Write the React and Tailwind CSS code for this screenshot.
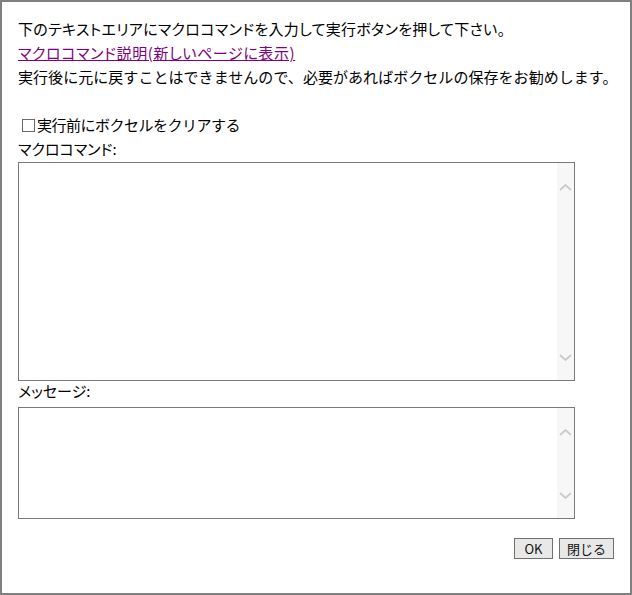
import React from "react";

// Fake textarea with a light scrollbar strip (up/down chevrons)
function CommandBox({ height }) {
  return (
    <div className={`flex w-[557px] border border-[#7a7a7a] bg-white ${height}`}>
      <div className="flex-1" />
      <div className="flex w-[17px] flex-col items-center justify-between bg-[#f7f7f7] pt-[21px] pb-[19px]">
        <svg width="13" height="7" viewBox="0 0 13 7" fill="none">
          <path d="M1 6 L6.5 1 L12 6" stroke="#cacaca" strokeWidth="1.8" />
        </svg>
        <svg width="13" height="7" viewBox="0 0 13 7" fill="none">
          <path d="M1 1 L6.5 6 L12 1" stroke="#cacaca" strokeWidth="1.8" />
        </svg>
      </div>
    </div>
  );
}

const palt = { fontFeatureSettings: '"palt"' };

export default function App() {
  return (
    <div
      className="flex h-[595px] w-[632px] flex-col border-2 border-[#808080] bg-white px-4 pt-[15px] text-[15px] leading-6 text-black"
      style={{ fontFamily: '"Noto Sans CJK JP", "Noto Sans", sans-serif' }}
    >
      <p className="tracking-[0.3px]" style={palt}>
        下のテキストエリアにマクロコマンドを入力して実行ボタンを押して下さい。
      </p>
      <p className="tracking-[0.6px]" style={palt}>
        <a href="#" className="text-[#800080] underline">
          マクロコマンド説明(新しいページに表示)
        </a>
      </p>
      <p className="whitespace-nowrap tracking-[0.05px]">
        実行後に元に戻すことはできませんので、必要があればボクセルの保存をお勧めします。
      </p>

      <label className="mt-6 flex items-center pl-1">
        <span className="mr-[2px] inline-block h-[13px] w-[13px] border border-[#6a6a6a]" />
        <span className="tracking-[-0.5px]">実行前にボクセルをクリアする</span>
      </label>
      <div style={palt}>マクロコマンド:</div>
      <div className="mt-[1px]">
        <CommandBox height="h-[219px]" />
      </div>

      <div className="mt-[-2px]" style={palt}>メッセージ:</div>
      <div className="mt-[4px]">
        <CommandBox height="h-[112px]" />
      </div>

      <div className="mt-[19px] flex justify-end gap-[6px] text-[13px] leading-none">
        <button className="h-[21px] w-[39px] border border-[#707070] bg-[#e8e8e8] text-[#111]">OK</button>
        <button className="h-[21px] w-[55px] border border-[#707070] bg-[#e8e8e8] text-[#111]">閉じる</button>
      </div>
    </div>
  );
}
